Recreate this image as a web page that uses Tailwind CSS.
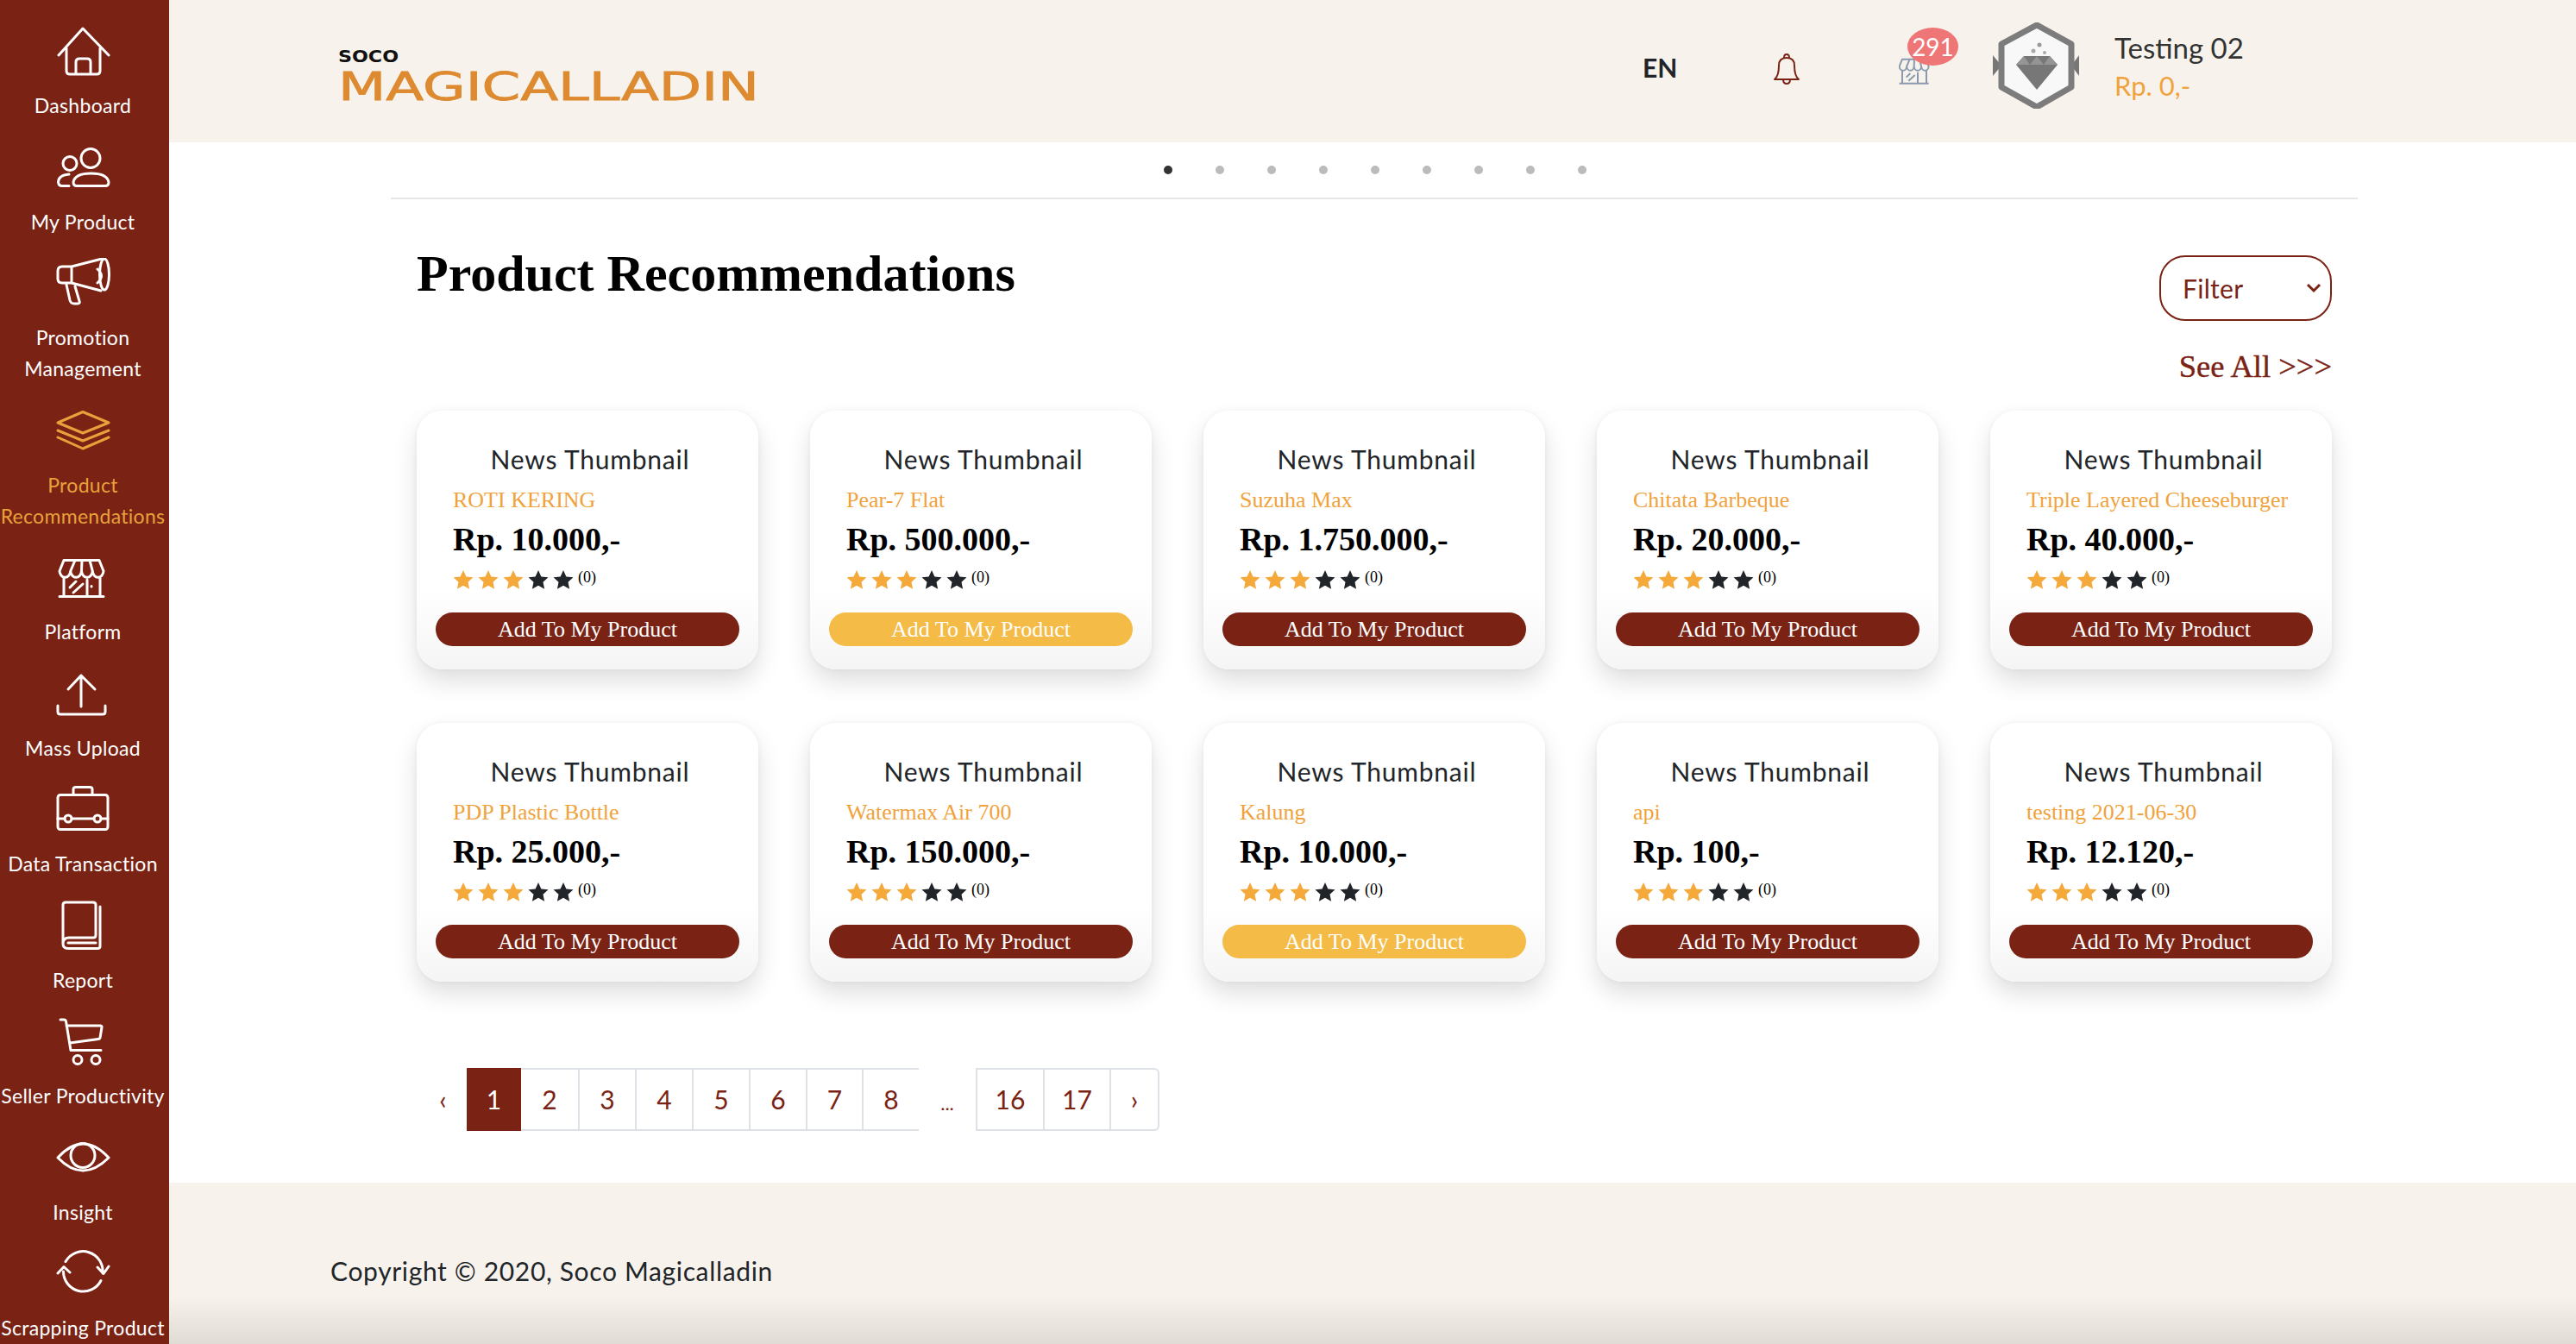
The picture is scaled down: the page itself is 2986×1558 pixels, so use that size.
<!DOCTYPE html>
<html lang="en">
<head>
    <meta charset="UTF-8">
    <meta name="viewport" content="width=device-width, initial-scale=1.0">
    <title>Product Recommendations</title>
    <script src="https://cdn.jsdelivr.net/npm/@tailwindcss/browser@4"></script>
</head>
<body class="bg-white font-['Lato',sans-serif] text-[#212529]">
<div class="flex h-[1558px] overflow-hidden">

    <!-- Sidebar -->
    <aside class="w-[196px] shrink-0 bg-[#7a2315] text-white text-[23px] leading-[36px] tracking-[0.3px] text-center pt-[5.5px] pr-[4px] overflow-hidden">
        <a class="block pt-[24.5px]">
            <svg class="mx-auto mb-[14px]" width="64" height="60" fill="none" stroke="currentColor" stroke-width="3" stroke-linecap="round" stroke-linejoin="round"><path d="M4 34 L32 3 L62 34 M13 26 V52 Q13 56 17 56 H48 Q52 56 52 52 V26 M24 56 V42 Q24 38 28 38 H37 Q41 38 41 42 V56"/></svg>
            Dashboard
        </a>
        <a class="block pt-[24.5px]">
            <svg class="mx-auto mb-[14px]" width="64" height="60" fill="none" stroke="currentColor" stroke-width="3" stroke-linecap="round" stroke-linejoin="round"><circle cx="41" cy="18.5" r="11"/><circle cx="17" cy="24.5" r="8"/><path d="M25 50.5 H58 Q62 50.5 62 46 Q60 36 41.5 36 Q23 36 21 46 Q21 50.5 25 50.5 M16 37 Q4 38 3.5 46 Q4 50.5 8 50.5 H16"/></svg>
            My Product
        </a>
        <a class="block pt-[24.5px]">
            <svg class="mx-auto mb-[14px]" width="64" height="60" fill="none" stroke="currentColor" stroke-width="3" stroke-linecap="round" stroke-linejoin="round"><path d="M19 10 L54 1 M19 29 L53 38 M19 10 H8 Q3 10 3 15 V24 Q3 29 8 29 H19 Z M13 31 L17 49 Q18 53 22 53 H26 Q29 53 28 50 L23 33 M49 13 Q58 21 49 29"/><ellipse cx="57" cy="19" rx="5.5" ry="18"/></svg>
            Promotion<br>Management
        </a>
        <a class="block pt-[24.5px] text-[#e9a13b]">
            <svg class="mx-auto mb-[14px]" width="64" height="60" fill="none" stroke="currentColor" stroke-width="3" stroke-linecap="round" stroke-linejoin="round"><path d="M3 20 L32 7.5 L62 20 L32 32 Z M3 29 L32 41 L62 29 M3 37 L32 50 L62 37"/></svg>
            Product<br><span class="whitespace-nowrap">Recommendations</span>
        </a>
        <a class="block pt-[24.5px]">
            <svg class="mx-auto mb-[14px]" width="64" height="60" fill="none" stroke="currentColor" stroke-width="3" stroke-linecap="round" stroke-linejoin="round"><path d="M10 9.5 H51 L56 22 A6.4 8 0 0 1 43.25 22 A6.4 8 0 0 1 30.5 22 A6.4 8 0 0 1 17.75 22 A6.4 8 0 0 1 5 22 Z M23 9.5 L17.75 22 M31 9.5 L30.5 22 M40 9.5 L43.25 22 M10 30 V51.5 M52 30 V51.5 M37 32 V51.5 M5 51.5 H56 M17 41 L24 34 M21 47 L32 37 M42 39.5 V40"/></svg>
            Platform
        </a>
        <a class="block pt-[24.5px]">
            <svg class="mx-auto mb-[14px]" width="64" height="60" fill="none" stroke="currentColor" stroke-width="3" stroke-linecap="round" stroke-linejoin="round"><path d="M30 8 L15 24 M30 8 L46 24 M30 8 V44 M3 43 V50 Q3 53 6 53 H55 Q58 53 58 50 V43"/></svg>
            Mass Upload
        </a>
        <a class="block pt-[24.5px]">
            <svg class="mx-auto mb-[14px]" width="64" height="60" fill="none" stroke="currentColor" stroke-width="3" stroke-linecap="round" stroke-linejoin="round"><rect x="3" y="12.5" width="58" height="40" rx="3"/><path d="M21 12.5 V6 Q21 3.5 24 3.5 H40 Q43 3.5 43 6 V12.5 M3 40 H11 M19 40 H45 M53 40 H61"/><circle cx="15" cy="40" r="4"/><circle cx="49" cy="40" r="4"/></svg>
            Data Transaction
        </a>
        <a class="block pt-[24.5px]">
            <svg class="mx-auto mb-[14px]" width="64" height="60" fill="none" stroke="currentColor" stroke-width="3" stroke-linecap="round" stroke-linejoin="round"><path d="M9 50 V5 Q9 2 12 2 H44 Q47 2 47 5 V40 Q47 43 44 43 H16 Q9 43 9 50 Q9 55.5 15 55.5 H49 Q52 55.5 52 53 V7 M15 49 H47"/></svg>
            Report
        </a>
        <a class="block pt-[24.5px]">
            <svg class="mx-auto mb-[14px]" width="64" height="60" fill="none" stroke="currentColor" stroke-width="3" stroke-linecap="round" stroke-linejoin="round"><path d="M6 4 H10 Q12 4 12.5 6 L18 39.5 H53 M13 11 H52 Q54.5 11 54 13 L52 25 Q51.5 26.5 50 26.5 L17 31"/><circle cx="26" cy="50.5" r="5"/><circle cx="47" cy="50.5" r="5"/></svg>
            <span class="whitespace-nowrap">Seller Productivity</span>
        </a>
        <a class="block pt-[24.5px]">
            <svg class="mx-auto mb-[14px]" width="64" height="60" fill="none" stroke="currentColor" stroke-width="3" stroke-linecap="round" stroke-linejoin="round"><path d="M3 29 Q32 -3 62 29 Q32 59 3 29 Z"/><circle cx="32" cy="26.5" r="14"/></svg>
            Insight
        </a>
        <a class="block pt-[24.5px]">
            <svg class="mx-auto mb-[14px]" width="64" height="60" fill="none" stroke="currentColor" stroke-width="3" stroke-linecap="round" stroke-linejoin="round"><path d="M12 15.5 A23 23 0 0 1 55 29 M49 22 L56 29.5 L62 21 M53 37.5 A23 23 0 0 1 9.5 27 M3 29 L10 21.5 L17 28"/></svg>
            <span class="whitespace-nowrap">Scrapping Product</span>
        </a>
    </aside>

    <div class="flex-1 flex flex-col min-w-0">

        <!-- Header -->
        <header class="relative h-[165px] shrink-0 bg-[#f7f3ec]">
            <svg class="absolute left-[196px] top-[44px]" width="500" height="90">
                <text x="0" y="28" textLength="70" lengthAdjust="spacingAndGlyphs" font-family="DejaVu Sans" font-weight="700" font-size="19" fill="#111">SOCO</text>
                <text x="0" y="72" textLength="488" lengthAdjust="spacingAndGlyphs" font-family="DejaVu Sans" font-size="45" fill="#dd8a30" stroke="#dd8a30" stroke-width="0.8">MAGICALLADIN</text>
            </svg>
            <span class="absolute left-[1708px] top-[58px] text-[30px] leading-[40px] font-bold">EN</span>
            <svg class="absolute left-[1860px] top-[62px]" width="30" height="36" fill="none" stroke="#7a2315" stroke-width="2" stroke-linejoin="round"><path d="M1 30 Q6 26 6 14 Q6 5 15 5 Q24 5 24 14 Q24 26 29 30 Z M12 5 Q12 1 15 1 Q18 1 18 5 M11 30 Q11 35 15 35 Q19 35 19 30"/></svg>
            <svg class="absolute left-[2005px] top-[67px]" width="36" height="32" viewBox="4 8 54 46" fill="none" stroke="#8a99ad" stroke-width="3" stroke-linejoin="round"><path d="M10 9.5 H51 L56 22 A6.4 8 0 0 1 43.25 22 A6.4 8 0 0 1 30.5 22 A6.4 8 0 0 1 17.75 22 A6.4 8 0 0 1 5 22 Z M23 9.5 L17.75 22 M31 9.5 L30.5 22 M40 9.5 L43.25 22 M10 30 V51.5 M52 30 V51.5 M37 32 V51.5 M5 51.5 H56 M17 41 L24 34 M21 47 L32 37"/></svg>
            <span class="absolute left-[2015px] top-[32px] w-[59px] h-[44px] rounded-[50%] bg-[#ee7676] text-white text-[28px] leading-[44px] text-center">291</span>
            <svg class="absolute left-[2114px] top-[26px] blur-[0.7px]" width="100" height="100">
                <path d="M0 38 L10 50 L0 62 Z M100 38 L91 50 L100 62 Z" fill="#777"/>
                <path d="M51 3 L91 25 V75 L51 98 L10 75 V25 Z" fill="#f8f8f8" stroke="#7c7c7c" stroke-width="7" stroke-linejoin="round"/>
                <path d="M36 39 H66 L75 49 L51 78 L27 49 Z" fill="#777"/>
                <path d="M36 39 L43 49 H27 Z M66 39 L59 49 H75 Z M51 39 L43 49 H59 Z" fill="#959595"/>
                <circle cx="54" cy="26" r="2.5" fill="#999"/><circle cx="47" cy="33" r="2.5" fill="#aaa"/><circle cx="60" cy="35" r="2" fill="#aaa"/>
            </svg>
            <div class="absolute left-[2255px] top-[33px] text-[33px] leading-[44px] text-[#333] whitespace-nowrap">Testing 02</div>
            <div class="absolute left-[2255px] top-[78px] text-[31px] leading-[42px] text-[#f0a23c] whitespace-nowrap">Rp. 0,-</div>
        </header>

        <!-- Content -->
        <main class="flex-1 pl-[257px] pr-[253px]">
            <div class="flex justify-center gap-[50px] pt-[27px] pl-[2px]">
                <span class="w-[10px] h-[10px] rounded-full bg-[#333]"></span>
                <span class="w-[10px] h-[10px] rounded-full bg-[#bbb]"></span>
                <span class="w-[10px] h-[10px] rounded-full bg-[#bbb]"></span>
                <span class="w-[10px] h-[10px] rounded-full bg-[#bbb]"></span>
                <span class="w-[10px] h-[10px] rounded-full bg-[#bbb]"></span>
                <span class="w-[10px] h-[10px] rounded-full bg-[#bbb]"></span>
                <span class="w-[10px] h-[10px] rounded-full bg-[#bbb]"></span>
                <span class="w-[10px] h-[10px] rounded-full bg-[#bbb]"></span>
                <span class="w-[10px] h-[10px] rounded-full bg-[#bbb]"></span>
            </div>
            <div class="h-[2px] bg-[#e6e6e6] mt-[27px]"></div>

            <div class="px-[30px]">
                <div class="flex justify-between items-start pt-[50px]">
                    <h1 class="font-['Liberation_Serif',serif] font-bold text-[60px] leading-[72px] text-black">Product Recommendations</h1>
                    <div class="flex flex-col items-end pt-[15px]">
                        <div class="w-[200px] h-[76px] border-2 border-[#7a2315] rounded-[30px] flex items-center justify-between pl-[25px] pr-[10px] text-[#7a2315] text-[30px] tracking-[0.3px]">
                            Filter
                            <svg width="18" height="12" fill="none" stroke="#7a2315" stroke-width="3"><path d="M2 2 L9 9 L16 2"/></svg>
                        </div>
                        <a class="mt-[31px] font-['Liberation_Serif',serif] text-[36.5px] leading-[44px] text-[#7a2315] [-webkit-text-stroke:0.4px_#7a2315]">See All &gt;&gt;&gt;</a>
                    </div>
                </div>

                <div id="cards" class="grid grid-cols-5 gap-x-[60px] gap-y-[62px] mt-[29px]"></div>

                <!-- Pagination -->
                <nav class="flex h-[73px] mt-[100px] text-[#7a2315] text-[30px]">
                    <span class="w-[58px] flex items-center justify-center text-[30px] pl-[3px]">‹</span>
                    <span class="w-[63px] flex items-center justify-center bg-[#7a2315] text-white">1</span>
                    <span class="w-[66px] flex items-center justify-center border-y-2 border-[#dee2e6]">2</span>
                    <span class="w-[66px] flex items-center justify-center border-y-2 border-l-2 border-[#dee2e6]">3</span>
                    <span class="w-[66px] flex items-center justify-center border-y-2 border-l-2 border-[#dee2e6]">4</span>
                    <span class="w-[66px] flex items-center justify-center border-y-2 border-l-2 border-[#dee2e6]">5</span>
                    <span class="w-[66px] flex items-center justify-center border-y-2 border-l-2 border-[#dee2e6]">6</span>
                    <span class="w-[65px] flex items-center justify-center border-y-2 border-l-2 border-[#dee2e6]">7</span>
                    <span class="w-[66px] flex items-center justify-center border-y-2 border-l-2 border-[#dee2e6]">8</span>
                    <span class="w-[66px] flex items-center justify-center text-[22px] pt-[8px]">...</span>
                    <span class="w-[78px] flex items-center justify-center border-y-2 border-l-2 border-[#dee2e6]">16</span>
                    <span class="w-[77px] flex items-center justify-center border-y-2 border-l-2 border-[#dee2e6]">17</span>
                    <span class="w-[58px] flex items-center justify-center text-[30px] border-2 border-[#dee2e6] rounded-r-[6px]">›</span>
                </nav>
            </div>
        </main>

        <!-- Footer -->
        <footer class="h-[187px] shrink-0 bg-linear-to-b from-[#f7f3ec] from-70% to-[#e0dcd5] pl-[187px] pt-[82px] text-[30px] leading-[40px] tracking-[0.65px]">
            Copyright © 2020, Soco Magicalladin
        </footer>
    </div>
</div>

<script>
    // product cards
    const products = [
        { name: 'ROTI KERING', price: '10.000' },
        { name: 'Pear-7 Flat', price: '500.000', added: true },
        { name: 'Suzuha Max', price: '1.750.000' },
        { name: 'Chitata Barbeque', price: '20.000' },
        { name: 'Triple Layered Cheeseburger', price: '40.000' },
        { name: 'PDP Plastic Bottle', price: '25.000' },
        { name: 'Watermax Air 700', price: '150.000' },
        { name: 'Kalung', price: '10.000', added: true },
        { name: 'api', price: '100' },
        { name: 'testing 2021-06-30', price: '12.120' }
    ];

    const star = color => `<svg width="24" height="24" viewBox="0 0 24 24" fill="${color}"><path d="M12 1 L15.4 8.4 L23.5 9.3 L17.5 14.8 L19.1 22.8 L12 18.8 L4.9 22.8 L6.5 14.8 L0.5 9.3 L8.6 8.4 Z"/></svg>`;

    document.getElementById('cards').innerHTML = products.map(p => `
        <div class="h-[300px] rounded-[30px] bg-linear-to-b from-white from-70% to-[#f5f5f6] shadow-[0_14px_28px_rgba(0,0,0,0.13),0_0_6px_rgba(0,0,0,0.05)] pt-[36px] font-['Liberation_Serif',serif]">
            <div class="font-['Lato',sans-serif] text-[30px] leading-[40px] tracking-[0.8px] text-center pl-[6px]">News Thumbnail</div>
            <div class="pl-[42px] mt-[13px] text-[26px] leading-[30px] text-[#f0a23c] whitespace-nowrap">${p.name}</div>
            <div class="pl-[42px] mt-[8px] text-[38px] leading-[44px] font-bold text-black">Rp. ${p.price},-</div>
            <div class="pl-[42px] mt-[13px] h-[24px] flex gap-[5px]">
                ${star('#f4a93a')}${star('#f4a93a')}${star('#f4a93a')}${star('#212529')}${star('#212529')}
                <span class="text-[18px] leading-[18px] text-black">(0)</span>
            </div>
            <button class="block ml-[22px] mt-[26px] w-[352px] h-[39px] rounded-full text-white text-[26px] leading-[37px] text-center ${p.added ? 'bg-[#f4bb47]' : 'bg-[#7a2315]'}">Add To My Product</button>
        </div>
    `).join('');
</script>
</body>
</html>
